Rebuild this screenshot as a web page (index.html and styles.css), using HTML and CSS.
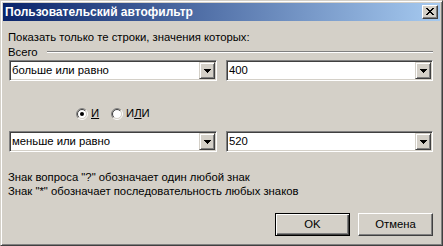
FILE: index.html
```html
<!DOCTYPE html>
<html lang="ru">
<head>
<meta charset="utf-8">
<link rel="stylesheet" href="styles.css">
</head>
<body>
<div class="window">
  <div class="titlebar">
    <span class="title">Пользовательский автофильтр</span>
    <div class="close">
      <svg width="16" height="14" viewBox="0 0 16 14" shape-rendering="crispEdges">
        <g fill="#000">
          <rect x="4" y="3" width="2" height="1"/><rect x="10" y="3" width="2" height="1"/>
          <rect x="5" y="4" width="2" height="1"/><rect x="9" y="4" width="2" height="1"/>
          <rect x="6" y="5" width="4" height="1"/>
          <rect x="7" y="6" width="2" height="1"/>
          <rect x="6" y="7" width="4" height="1"/>
          <rect x="5" y="8" width="2" height="1"/><rect x="9" y="8" width="2" height="1"/>
          <rect x="4" y="9" width="2" height="1"/><rect x="10" y="9" width="2" height="1"/>
        </g>
      </svg>
    </div>
  </div>
  <div class="body">
    <div class="prompt">Показать только те строки, значения которых:</div>
    <div class="group"><span class="group-label">Всего</span><div class="etch"></div></div>
    <div class="row">
      <div class="combo combo-op"><span class="combo-text">больше или равно</span><div class="drop"><svg width="7" height="4" viewBox="0 0 7 4" shape-rendering="crispEdges"><rect x="0" y="0" width="7" height="1"/><rect x="1" y="1" width="5" height="1"/><rect x="2" y="2" width="3" height="1"/><rect x="3" y="3" width="1" height="1"/></svg></div></div>
      <div class="combo combo-val"><span class="combo-text">400</span><div class="drop"><svg width="7" height="4" viewBox="0 0 7 4" shape-rendering="crispEdges"><rect x="0" y="0" width="7" height="1"/><rect x="1" y="1" width="5" height="1"/><rect x="2" y="2" width="3" height="1"/><rect x="3" y="3" width="1" height="1"/></svg></div></div>
    </div>
    <div class="radios">
      <label class="opt opt-and">
        <svg class="radio" width="12" height="12" viewBox="0 0 12 12">
          <circle cx="6" cy="6" r="4.5" fill="#fff"/>
          <path d="M2.111 9.889 A5.5 5.5 0 0 1 9.889 2.111" fill="none" stroke="#808080"/>
          <path d="M9.889 2.111 A5.5 5.5 0 0 1 2.111 9.889" fill="none" stroke="#fff"/>
          <path d="M2.818 9.182 A4.5 4.5 0 0 1 9.182 2.818" fill="none" stroke="#404040"/>
          <path d="M9.182 2.818 A4.5 4.5 0 0 1 2.818 9.182" fill="none" stroke="#d4d0c8"/>
          <circle cx="6" cy="6" r="2" fill="#000"/>
        </svg>
        <span class="opt-text"><u>И</u></span>
      </label>
      <label class="opt">
        <svg class="radio" width="12" height="12" viewBox="0 0 12 12">
          <circle cx="6" cy="6" r="4.5" fill="#fff"/>
          <path d="M2.111 9.889 A5.5 5.5 0 0 1 9.889 2.111" fill="none" stroke="#808080"/>
          <path d="M9.889 2.111 A5.5 5.5 0 0 1 2.111 9.889" fill="none" stroke="#fff"/>
          <path d="M2.818 9.182 A4.5 4.5 0 0 1 9.182 2.818" fill="none" stroke="#404040"/>
          <path d="M9.182 2.818 A4.5 4.5 0 0 1 2.818 9.182" fill="none" stroke="#d4d0c8"/>
        </svg>
        <span class="opt-text">И<u>Л</u>И</span>
      </label>
    </div>
    <div class="row row-second">
      <div class="combo combo-op"><span class="combo-text">меньше или равно</span><div class="drop"><svg width="7" height="4" viewBox="0 0 7 4" shape-rendering="crispEdges"><rect x="0" y="0" width="7" height="1"/><rect x="1" y="1" width="5" height="1"/><rect x="2" y="2" width="3" height="1"/><rect x="3" y="3" width="1" height="1"/></svg></div></div>
      <div class="combo combo-val"><span class="combo-text">520</span><div class="drop"><svg width="7" height="4" viewBox="0 0 7 4" shape-rendering="crispEdges"><rect x="0" y="0" width="7" height="1"/><rect x="1" y="1" width="5" height="1"/><rect x="2" y="2" width="3" height="1"/><rect x="3" y="3" width="1" height="1"/></svg></div></div>
    </div>
    <div class="hints">
      <div>Знак вопроса "?" обозначает один любой знак</div>
      <div>Знак "*" обозначает последовательность любых знаков</div>
    </div>
    <div class="buttons">
      <div class="btn btn-default">OK</div>
      <div class="btn">Отмена</div>
    </div>
  </div>
</div>
</body>
</html>
```
FILE: styles.css
```css
* { box-sizing: border-box; }
html, body { margin: 0; padding: 0; }
body {
  width: 443px;
  height: 246px;
  overflow: hidden;
  background: #d4d0c8;
  font-family: "Liberation Sans", Arial, sans-serif;
  font-size: 11.3px;
  color: #000;
}
.window {
  width: 443px;
  height: 246px;
  background: #d4d0c8;
  border: 1px solid;
  border-color: #d4d0c8 #404040 #404040 #d4d0c8;
  box-shadow: inset 1px 1px #fff, inset -1px -1px #808080;
  padding: 2px;
  display: flex;
  flex-direction: column;
}
.titlebar {
  height: 18px;
  flex: none;
  background: linear-gradient(to right, #0a246a, #a6caf0);
  display: flex;
  align-items: center;
  padding-left: 2px;
  padding-right: 2px;
}
.title {
  flex: 1;
  color: #fff;
  font-family: "Liberation Sans", Arial, sans-serif;
  font-weight: bold;
  font-size: 12px;
  line-height: 18px;
  white-space: nowrap;
}
.close {
  width: 16px;
  height: 14px;
  background: #d4d0c8;
  border: 1px solid;
  border-color: #fff #404040 #404040 #fff;
  box-shadow: inset -1px -1px #808080;
}
.close svg {
  display: block;
  margin: -1px 0 0 -1px;
}
.body {
  flex: 1;
  padding: 10px 7px 0 5px;
  display: flex;
  flex-direction: column;
}
.prompt {
  line-height: 13px;
  white-space: nowrap;
}
.group {
  display: flex;
  margin-top: 2px;
  line-height: 13px;
}
.group-label { white-space: nowrap; }
.etch {
  flex: 1;
  margin-left: 9px;
  margin-top: 5px;
  height: 2px;
  border-top: 1px solid #808080;
  border-bottom: 1px solid #fff;
}
.row {
  display: flex;
  justify-content: space-between;
  margin-top: 1px;
}
.row-second { margin-top: 11px; }
.combo {
  height: 21px;
  background: #fff;
  border: 1px solid;
  border-color: #808080 #fff #fff #808080;
  box-shadow: inset 1px 1px #404040, inset -1px -1px #d4d0c8;
  padding: 1px;
  display: flex;
}
.combo-op { width: 208px; margin-left: 1px; }
.combo-val { width: 207px; }
.combo-text {
  flex: 1;
  line-height: 17px;
  padding-left: 1px;
  white-space: nowrap;
  overflow: hidden;
}
.drop {
  width: 16px;
  height: 17px;
  background: #d4d0c8;
  border: 1px solid;
  border-color: #d4d0c8 #404040 #404040 #d4d0c8;
  box-shadow: inset 1px 1px #fff, inset -1px -1px #808080;
  display: flex;
  align-items: center;
  justify-content: center;
}
.drop svg { display: block; fill: #000; }
.radios {
  display: flex;
  align-items: center;
  height: 13px;
  margin-top: 26px;
  padding-left: 68px;
}
.opt {
  display: flex;
  align-items: center;
  line-height: 13px;
}
.opt-and { width: 35px; }
.radio { display: block; margin-right: 3px; flex: none; }
.opt-text u { text-decoration-thickness: 1px; text-underline-offset: 1px; }
.hints {
  margin-top: 18px;
  line-height: 14px;
  white-space: nowrap;
}
.buttons {
  display: flex;
  justify-content: flex-end;
  gap: 8px;
  margin-top: 15px;
}
.btn {
  width: 75px;
  height: 23px;
  background: #d4d0c8;
  border: 1px solid;
  border-color: #fff #404040 #404040 #fff;
  box-shadow: inset -1px -1px #808080;
  display: flex;
  align-items: center;
  justify-content: center;
  line-height: 13px;
}
.btn-default {
  border-color: #000;
  box-shadow: inset 1px 1px #fff, inset -1px -1px #404040, inset -2px -2px #808080;
}
```
